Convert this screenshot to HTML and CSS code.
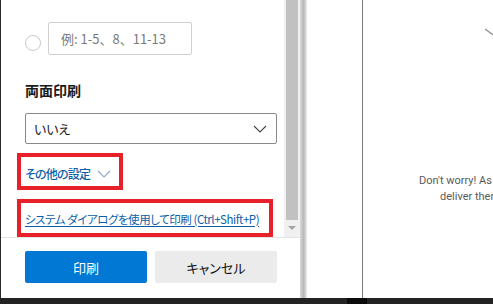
FILE: index.html
```html
<!DOCTYPE html>
<html lang="ja">
<head>
<meta charset="utf-8">
<title>印刷</title>
<link rel="stylesheet" href="styles.css">
</head>
<body>
<div class="screen">
  <div class="main">
    <aside class="panel">
      <div class="scroll">
        <div class="content">
          <div class="range-row">
            <span class="radio"></span>
            <div class="range-input">例: 1-5、8、11-13</div>
          </div>
          <h2 class="heading">両面印刷</h2>
          <div class="select">
            <span>いいえ</span>
            <svg class="chev" width="14" height="8" viewBox="0 0 14 8"><path d="M1 1 L7 7 L13 1" fill="none" stroke="#444" stroke-width="1.1"/></svg>
          </div>
          <div class="mark mark-more">
            <span class="more">その他の設定</span>
            <svg class="more-chev" width="14" height="8" viewBox="0 0 14 8"><path d="M1 1 L7 7 L13 1" fill="none" stroke="#8eaccb" stroke-width="1.2"/></svg>
          </div>
          <div class="mark mark-sys">
            <a class="syslink">システム ダイアログを使用して印刷 (Ctrl+Shift+P)</a>
          </div>
        </div>
        <div class="scrollbar">
          <div class="thumb"></div>
          <div class="arrow"></div>
        </div>
      </div>
      <div class="footer">
        <button class="btn primary">印刷</button>
        <button class="btn secondary">キャンセル</button>
      </div>
    </aside>
    <div class="edge"></div>
    <section class="preview">
      <div class="gutter"></div>
      <div class="page">
        <svg class="deco" width="10" height="8" viewBox="0 0 10 8"><path d="M0 1 L9 7.5" stroke="#8a8a8a" stroke-width="1.2"/></svg>
        <p class="msg"><span class="l1">Don't worry! As</span><span class="l2">deliver ther</span></p>
      </div>
    </section>
  </div>
  <div class="taskbar"><span class="seg"></span></div>
</div>
</body>
</html>
```
FILE: styles.css
```css
* { box-sizing: border-box; }
html, body { margin: 0; padding: 0; }
body {
  width: 493px;
  height: 304px;
  overflow: hidden;
  background: #fff;
  font-family: "Noto Sans CJK JP", "Noto Sans", sans-serif;
  font-feature-settings: "palt";
}
.screen { display: flex; flex-direction: column; width: 493px; height: 304px; }
.main { display: flex; height: 298px; }
.panel {
  flex: 0 0 300px;
  width: 300px;
  border-left: 1px solid #2a2a2a;
  display: flex;
  flex-direction: column;
  background: #fff;
}
.scroll { display: flex; height: 237px; }
.content { width: 283px; padding: 22px 0 0 24px; }
.range-row { display: flex; align-items: flex-start; gap: 7px; }
.radio {
  width: 16px; height: 16px;
  margin-top: 13px;
  border: 1px solid #c9c9c9;
  border-radius: 50%;
}
.range-input {
  width: 144px; height: 33px;
  border: 1px solid #d0d0d0;
  border-radius: 2px;
  padding: 0 0 0 12px;
  font-size: 13px;
  line-height: 31px;
  color: #7a7a7a;
  font-feature-settings: normal;
}
.heading {
  margin: 25px 0 0;
  font-size: 14px;
  line-height: 20px;
  font-weight: 700;
  color: #1b1b1b;
}
.select {
  margin-top: 13px;
  width: 252px; height: 31px;
  border: 1px solid #8a8a8a;
  border-radius: 2px;
  display: flex; align-items: center; justify-content: space-between;
  padding: 0 9px 0 8px;
  font-size: 13px;
  color: #1b1b1b;
}
.chev { margin-top: 1px; }
.mark {
  border: 4px solid #e8202a;
  margin-left: -8px;
  margin-top: 9px;
  display: flex;
  align-items: center;
  padding-left: 4px;
}
.mark-more { width: 106px; height: 37px; gap: 7px; padding-top: 3px; }
.mark-sys { width: 256px; height: 38px; padding-top: 1px; }
.more {
  font-size: 12px;
  letter-spacing: -0.8px;
  font-weight: 500;
  color: #0a5fa8;
}
.more-chev { margin-top: 2px; }
.syslink {
  font-size: 11.5px;
  letter-spacing: -0.45px;
  color: #0a5fa8;
  text-decoration: underline;
  text-underline-offset: 2px;
  white-space: nowrap;
}
.scrollbar {
  width: 16px;
  background: #f0f0f0;
  display: flex; flex-direction: column; align-items: center;
}
.thumb { width: 12px; height: 220px; background: #c1c1c1; }
.arrow {
  margin-top: 6px;
  width: 0; height: 0;
  border-left: 4px solid transparent;
  border-right: 4px solid transparent;
  border-top: 4px solid #a3a3a3;
}
.footer {
  border-top: 1px solid #e3e3e3;
  flex: 1;
  display: flex;
  gap: 8px;
  padding: 13px 0 0 24px;
}
.btn {
  width: 122px; height: 32px;
  border: none; border-radius: 2px;
  font-family: inherit;
  font-feature-settings: "palt";
  font-size: 13px;
}
.primary { background: #0078d4; color: #fff; }
.secondary { background: #ebebeb; color: #111; }
.edge {
  flex: 0 0 7px;
  background: linear-gradient(to right, #dcdcdc 0, #c4c4c4 30%, #b8b8b8 55%, #d2d2d2 75%, #eeeeee 100%);
}
.preview { flex: 1 1 auto; min-width: 0; display: flex; background: #fff; }
.gutter { flex: 0 0 55px; }
.page {
  flex: 1 1 auto;
  min-width: 0;
  border-left: 1px solid #7a7a7a;
  overflow: hidden;
  padding-top: 28px;
}
.deco { display: block; margin-left: 122px; }
.msg {
  margin: 137px 0 0;
  font-family: Roboto, "Noto Sans", sans-serif;
  font-size: 11px;
  line-height: 16px;
  color: #5a5a5a;
  white-space: nowrap;
}
.l1 { display: block; margin-left: 56px; }
.l2 { display: block; margin-left: 77px; }
.taskbar { height: 6px; background: #232323; display: flex; }
.seg { margin-left: 347px; width: 20px; background: #0b0b0b; }
```
